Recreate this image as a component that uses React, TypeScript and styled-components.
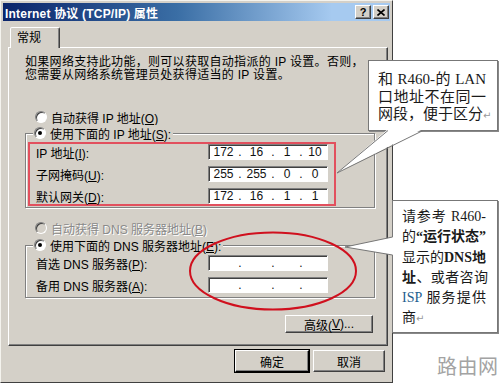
import React from 'react';
import styled, { createGlobalStyle, css } from 'styled-components';

const GlobalStyle = createGlobalStyle`
  html, body { margin: 0; padding: 0; background: #fff; }
  body { font-family: "Liberation Sans", "Noto Sans CJK SC", sans-serif; color: #000; }
`;

const face = '#d4d0c8';

const Page = styled.div`
  position: relative;
  width: 500px;
  height: 383px;
  overflow: hidden;
  background: #fff;
`;

const Dialog = styled.div`
  width: 393px;
  height: 383px;
  box-sizing: border-box;
  background: ${face};
  border: 1px solid;
  border-color: #f4f3ee #404040 #404040 #f4f3ee;
  padding: 2px;
  display: flex;
  flex-direction: column;
  font-size: 12px;
`;

const TitleBar = styled.div`
  height: 18px;
  flex: none;
  display: flex;
  align-items: center;
  justify-content: space-between;
  padding: 0 1px 0 2px;
  background: linear-gradient(to right, #0a246a 0%, #3a6ea5 45%, #a6caf0 85%);
`;

const TitleText = styled.span`
  color: #fff;
  font-weight: bold;
  font-size: 12px;
  letter-spacing: 0.2px;
  white-space: nowrap;
`;

const TitleButtons = styled.div`
  display: flex;
  gap: 2px;
`;

const CaptionButton = styled.div`
  width: 16px;
  height: 14px;
  box-sizing: border-box;
  background: ${face};
  border: 1px solid;
  border-color: #fff #404040 #404040 #fff;
  box-shadow: inset -1px -1px 0 #808080;
  display: flex;
  align-items: center;
  justify-content: center;
  font-weight: bold;
  font-size: 11px;
  line-height: 1;
`;

const TabStrip = styled.div`
  margin-top: 6px;
  padding-left: 7px;
  display: flex;
`;

const Tab = styled.div`
  position: relative;
  z-index: 1;
  width: 50px;
  height: 21px;
  box-sizing: border-box;
  margin-bottom: -1px;
  background: ${face};
  border: 1px solid;
  border-bottom: none;
  border-color: #fff #404040 transparent #fff;
  border-radius: 2px 2px 0 0;
  box-shadow: inset -1px 0 0 #808080;
  padding: 3px 0 0 6px;
  font-size: 12px;
  line-height: 14px;
`;

const Panel = styled.div`
  margin-left: 5px;
  width: 380px;
  height: 299px;
  box-sizing: border-box;
  border: 1px solid;
  border-color: #fff #404040 #404040 #fff;
  box-shadow: inset -1px -1px 0 #808080;
  display: flex;
  flex-direction: column;
`;

const Intro = styled.p`
  margin: 8px 0 0 16px;
  font-size: 12px;
  line-height: 13px;
  letter-spacing: 0.3px;
  white-space: nowrap;
`;

const RadioRow = styled.div<{ $top: number; $disabled?: boolean }>`
  display: flex;
  align-items: center;
  gap: 4px;
  height: 16px;
  margin: ${(p) => p.$top}px 0 0 26px;
  font-size: 12px;
  white-space: nowrap;
  ${(p) =>
    p.$disabled &&
    css`
      color: #8a8a8a;
      text-shadow: 1px 1px 0 #fff;
    `}
`;

const Radio = styled.span<{ $checked?: boolean; $disabled?: boolean }>`
  position: relative;
  flex: none;
  width: 12px;
  height: 12px;
  box-sizing: border-box;
  border-radius: 50%;
  border: 1px solid;
  border-color: #808080 #fff #fff #808080;
  box-shadow: inset 1px 1px 0 #404040;
  background: ${(p) => (p.$disabled ? face : '#fff')};
  ${(p) =>
    p.$checked &&
    css`
      &::after {
        content: '';
        position: absolute;
        left: 3px;
        top: 3px;
        width: 4px;
        height: 4px;
        border-radius: 50%;
        background: #000;
      }
    `}
`;

const GroupBox = styled.fieldset<{ $top: number }>`
  margin: ${(p) => p.$top}px 0 0 16px;
  width: 350px;
  min-width: 0;
  box-sizing: border-box;
  padding: 0;
  border: 1px solid #808080;
  box-shadow: 1px 1px 0 #fff, inset 1px 1px 0 #fff;
`;

const GroupLegend = styled.legend`
  margin-left: 7px;
  padding: 0 2px 0 1px;
  height: 16px;
  display: flex;
  align-items: center;
  gap: 4px;
  background: ${face};
  font-size: 12px;
  white-space: nowrap;
`;

const RedFrame = styled.div`
  margin: 1px 0 1px 2px;
  width: 308px;
  box-sizing: border-box;
  border: 2px solid #e2505e;
  padding: 0 6px;
  display: flex;
  flex-direction: column;
  gap: 6px;
`;

const DnsRows = styled.div`
  padding: 2px 0 4px 10px;
  display: flex;
  flex-direction: column;
  gap: 6px;
`;

const FieldRow = styled.div`
  display: flex;
  align-items: center;
  height: 16px;
`;

const FieldLabel = styled.span`
  width: 172px;
  flex: none;
  font-size: 12px;
  white-space: nowrap;
`;

const IpBox = styled.div`
  width: 120px;
  height: 16px;
  flex: none;
  box-sizing: border-box;
  background: #fff;
  border: 1px solid;
  border-color: #808080 #fff #fff #808080;
  box-shadow: inset 1px 1px 0 #404040;
  display: grid;
  grid-template-columns: 29px 4px 29px 4px 24px 4px 1fr;
  align-items: center;
  font-family: "Liberation Sans", sans-serif;
  font-size: 12px;
  line-height: 14px;
  color: #111;
`;

const Octet = styled.span`
  text-align: center;
`;

const Dot = styled.span`
  text-align: center;
`;

const AdvancedRow = styled.div`
  display: flex;
  justify-content: flex-end;
  margin-top: 17px;
  padding-right: 14px;
`;

const WinButton = styled.div<{ $w: number; $h: number; $default?: boolean }>`
  width: ${(p) => p.$w}px;
  height: ${(p) => p.$h}px;
  box-sizing: border-box;
  background: ${face};
  border: 1px solid;
  border-color: #fff #404040 #404040 #fff;
  box-shadow: inset -1px -1px 0 #808080;
  display: flex;
  align-items: center;
  justify-content: center;
  font-size: 12px;
  white-space: nowrap;
  ${(p) =>
    p.$default &&
    css`
      outline: 1px solid #000;
      outline-offset: 0;
      border-color: #fff #000 #000 #fff;
    `}
`;

const ButtonRow = styled.div`
  margin-top: 4px;
  display: flex;
  justify-content: flex-end;
  gap: 4px;
  padding-right: 5px;
`;

const Callout = styled.div<{ $x: number; $y: number; $w: number; $h: number }>`
  position: absolute;
  left: ${(p) => p.$x}px;
  top: ${(p) => p.$y}px;
  width: ${(p) => p.$w}px;
  height: ${(p) => p.$h}px;
  box-sizing: border-box;
  background: #fff;
  border: 1px solid #777;
  box-shadow: 1px 1px 0 #888;
  font-family: "Liberation Serif", "Noto Sans CJK SC", serif;
  color: #1a1a1a;
`;

const NoteOne = styled(Callout)`
  padding: 10px 0 0 9px;
  font-size: 15px;
  line-height: 17.5px;
`;

const NoteTwo = styled(Callout)`
  padding: 6px 0 0 9px;
  font-size: 14px;
  line-height: 20.3px;
`;

const NoteLine = styled.div<{ $w?: number }>`
  white-space: nowrap;
  ${(p) =>
    p.$w &&
    css`
      width: ${p.$w}px;
      white-space: normal;
      text-align: justify;
      text-align-last: justify;
    `}
`;

const Strong = styled.b`
  font-weight: bold;
`;

const Isp = styled.span`
  color: #1f5f8f;
`;

const Ret = styled.span`
  color: #999;
  font-size: 10px;
  font-family: "DejaVu Sans", sans-serif;
`;

const Overlay = styled.svg`
  position: absolute;
  left: 0;
  top: 0;
  pointer-events: none;
`;

const Watermark = styled.div`
  position: absolute;
  left: 437px;
  top: 354px;
  font-family: "Noto Sans CJK SC", sans-serif;
  font-size: 20px;
  line-height: 24px;
  color: #a3a3a3;
  letter-spacing: 0.5px;
`;

const IpField = ({ parts }: { parts?: string[] }) => {
  const v = parts ?? ['', '', '', ''];
  return (
    <IpBox>
      <Octet>{v[0]}</Octet>
      <Dot>.</Dot>
      <Octet>{v[1]}</Octet>
      <Dot>.</Dot>
      <Octet>{v[2]}</Octet>
      <Dot>.</Dot>
      <Octet>{v[3]}</Octet>
    </IpBox>
  );
};

export default function App() {
  return (
    <Page>
      <GlobalStyle />
      <Dialog>
        <TitleBar>
          <TitleText>Internet 协议 (TCP/IP) 属性</TitleText>
          <TitleButtons>
            <CaptionButton>?</CaptionButton>
            <CaptionButton>
              <svg width="8" height="7" viewBox="0 0 8 7">
                <path d="M0.5 0.5 L7.5 6.5 M7.5 0.5 L0.5 6.5" stroke="#000" strokeWidth="1.6" />
              </svg>
            </CaptionButton>
          </TitleButtons>
        </TitleBar>

        <TabStrip>
          <Tab>常规</Tab>
        </TabStrip>

        <Panel>
          <Intro>
            如果网络支持此功能，则可以获取自动指派的 IP 设置。否则，
            <br />
            您需要从网络系统管理员处获得适当的 IP 设置。
          </Intro>

          <RadioRow $top={27}>
            <Radio />
            <span>
              自动获得 IP 地址(<u>O</u>)
            </span>
          </RadioRow>

          <GroupBox $top={0}>
            <GroupLegend>
              <Radio $checked />
              <span>
                使用下面的 IP 地址(<u>S</u>):
              </span>
            </GroupLegend>
            <RedFrame>
              <FieldRow>
                <FieldLabel>
                  IP 地址(<u>I</u>):
                </FieldLabel>
                <IpField parts={['172', '16', '1', '10']} />
              </FieldRow>
              <FieldRow>
                <FieldLabel>
                  子网掩码(<u>U</u>):
                </FieldLabel>
                <IpField parts={['255', '255', '0', '0']} />
              </FieldRow>
              <FieldRow>
                <FieldLabel>
                  默认网关(<u>D</u>):
                </FieldLabel>
                <IpField parts={['172', '16', '1', '1']} />
              </FieldRow>
            </RedFrame>
          </GroupBox>

          <RadioRow $top={12} $disabled>
            <Radio $disabled />
            <span>
              自动获得 DNS 服务器地址(<u>B</u>)
            </span>
          </RadioRow>

          <GroupBox $top={1}>
            <GroupLegend>
              <Radio $checked />
              <span>
                使用下面的 DNS 服务器地址(<u>E</u>):
              </span>
            </GroupLegend>
            <DnsRows>
              <FieldRow>
                <FieldLabel>
                  首选 DNS 服务器(<u>P</u>):
                </FieldLabel>
                <IpField />
              </FieldRow>
              <FieldRow>
                <FieldLabel>
                  备用 DNS 服务器(<u>A</u>):
                </FieldLabel>
                <IpField />
              </FieldRow>
            </DnsRows>
          </GroupBox>

          <AdvancedRow>
            <WinButton $w={88} $h={18}>
              高级(<u>V</u>)...
            </WinButton>
          </AdvancedRow>
        </Panel>

        <ButtonRow>
          <WinButton $w={74} $h={22} $default>
            确定
          </WinButton>
          <WinButton $w={72} $h={22}>
            取消
          </WinButton>
        </ButtonRow>
      </Dialog>

      <NoteOne $x={368} $y={60} $w={130} $h={71}>
        <NoteLine $w={108}>和 R460-的 LAN</NoteLine>
        <NoteLine $w={108}>口地址不在同一</NoteLine>
        <NoteLine>
          网段，便于区分<Ret>↵</Ret>
        </NoteLine>
      </NoteOne>

      <NoteTwo $x={392} $y={200} $w={106} $h={133}>
        <NoteLine $w={84}>请参考 R460-</NoteLine>
        <NoteLine>
          的<Strong>“运行状态”</Strong>
        </NoteLine>
        <NoteLine>
          显示的<Strong>DNS地</Strong>
        </NoteLine>
        <NoteLine $w={86}>
          <Strong>址</Strong>、或者咨询
        </NoteLine>
        <NoteLine $w={84}>
          <Isp>ISP</Isp> 服务提供
        </NoteLine>
        <NoteLine>
          商<Ret>↵</Ret>
        </NoteLine>
      </NoteTwo>

      <Overlay width="500" height="383" viewBox="0 0 500 383">
        <ellipse cx="273" cy="271" rx="83" ry="38.5" fill="none" stroke="#d0101e" strokeWidth="2" />
        <polygon points="388,129 337,173 423,129" fill="#fff" />
        <polyline points="388,130.5 337,173 423,130.5" fill="none" stroke="#777" strokeWidth="1" />
        <polygon points="393,237 345,247 393,255" fill="#fff" />
        <polyline points="392.5,237 345,247 392.5,255" fill="none" stroke="#777" strokeWidth="1" />
      </Overlay>

      <Watermark>路由网</Watermark>
    </Page>
  );
}
